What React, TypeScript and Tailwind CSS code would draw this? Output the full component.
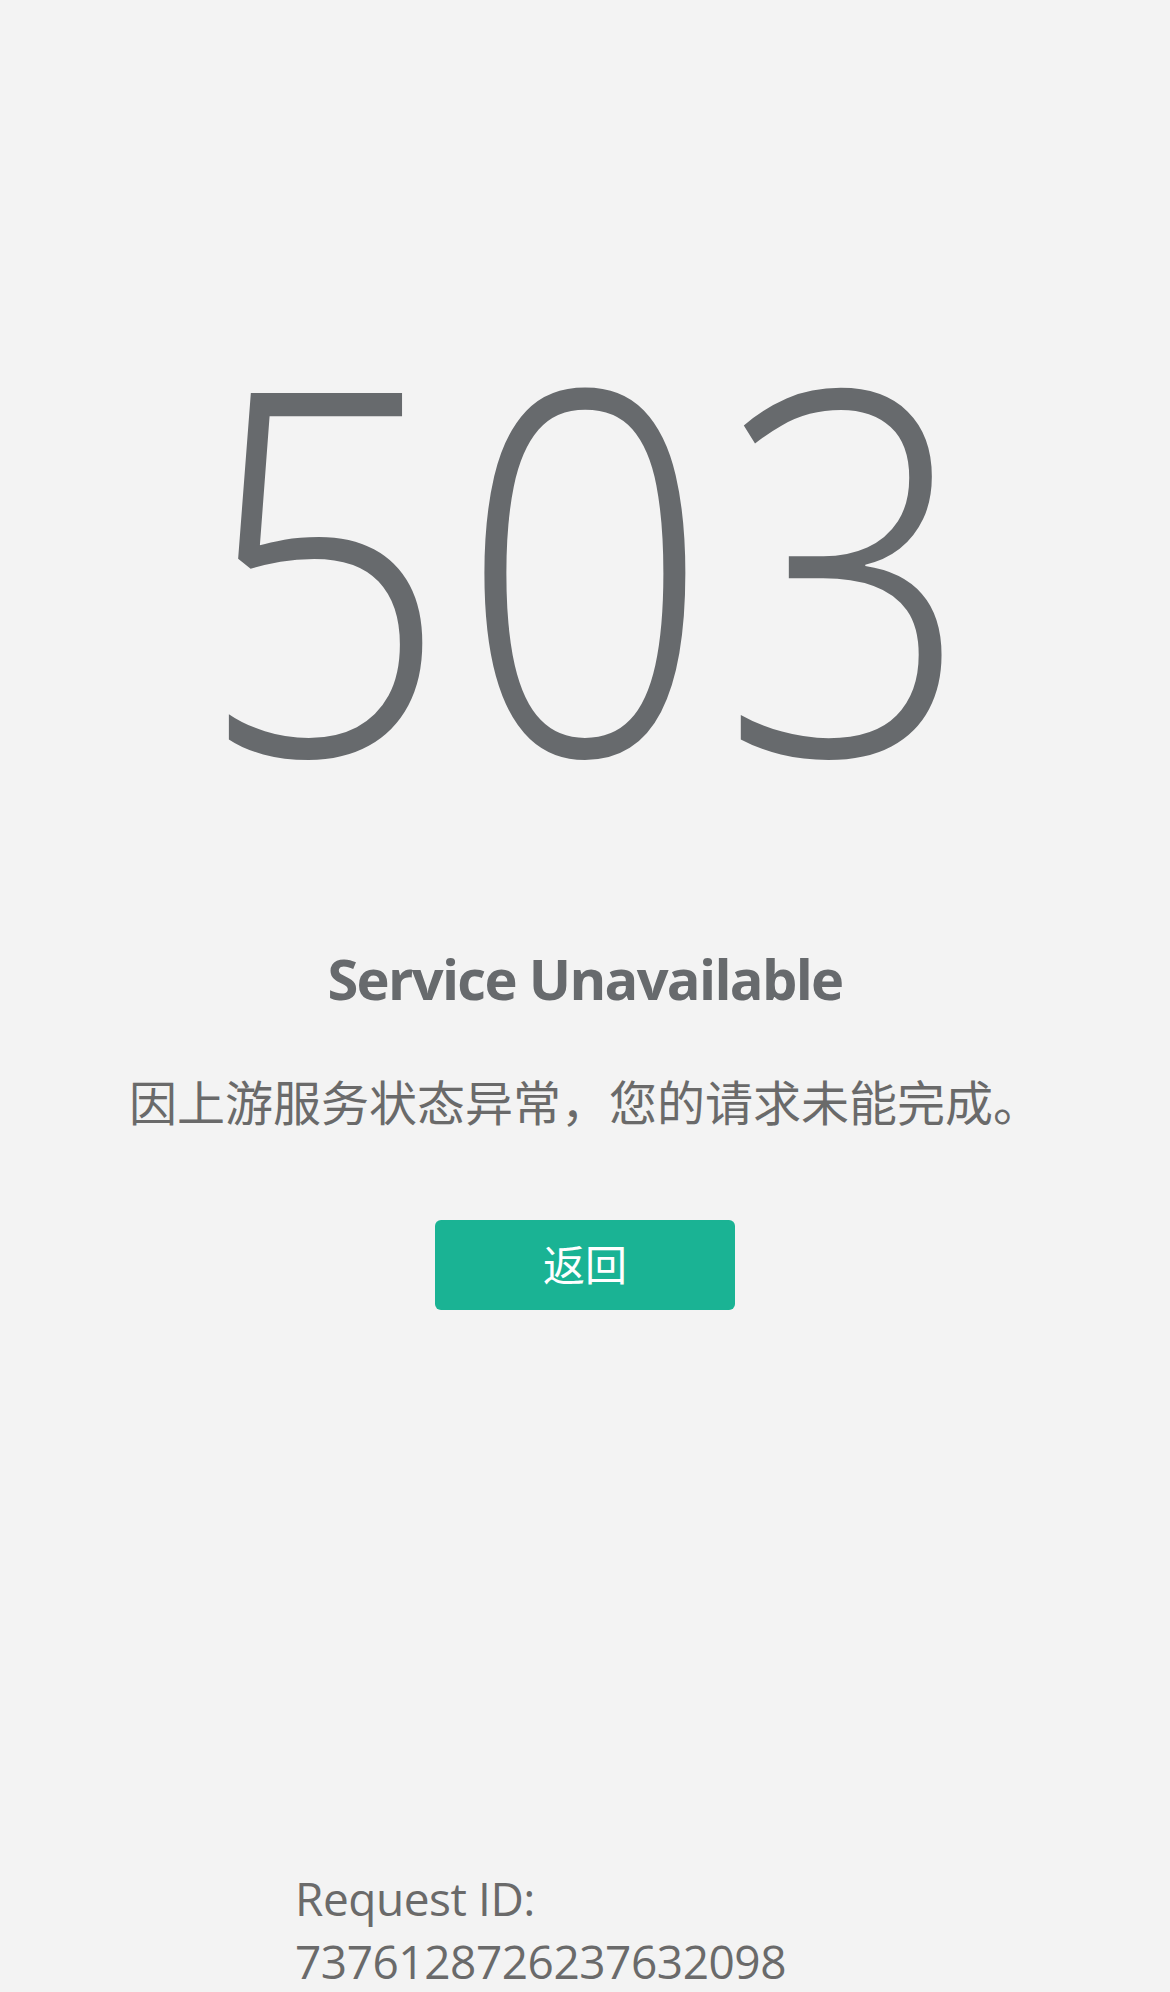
import React from "react";

export default function App() {
  return (
    <div
      className="min-h-screen w-full bg-[#f3f3f3] flex flex-col items-center text-[#676a6d]"
      style={{ fontFamily: '"Open Sans", "Noto Sans CJK SC", sans-serif' }}
    >
      <div className="mt-[305px] h-[507px] text-[507px] leading-none font-light tracking-[11px] pl-[11px] scale-x-[0.87]">
        503
      </div>
      <h2 className="mt-[133px] text-[56px] leading-[67px] font-bold tracking-[-0.03em]">
        Service Unavailable
      </h2>
      <p className="mt-[55px] text-[48px] leading-[72px] text-[#6a6a6a]">
        因上游服务状态异常，您的请求未能完成。
      </p>
      <button className="mt-[81px] w-[300px] h-[90px] rounded-[6px] bg-[#1ab394] text-white text-[42px] leading-none">
        返回
      </button>
      <div className="mt-[557px] w-[580px] text-left text-[46px] leading-[63px] tracking-[-0.01em] text-[#6a6a6a]">
        Request ID: 7376128726237632098
      </div>
    </div>
  );
}
